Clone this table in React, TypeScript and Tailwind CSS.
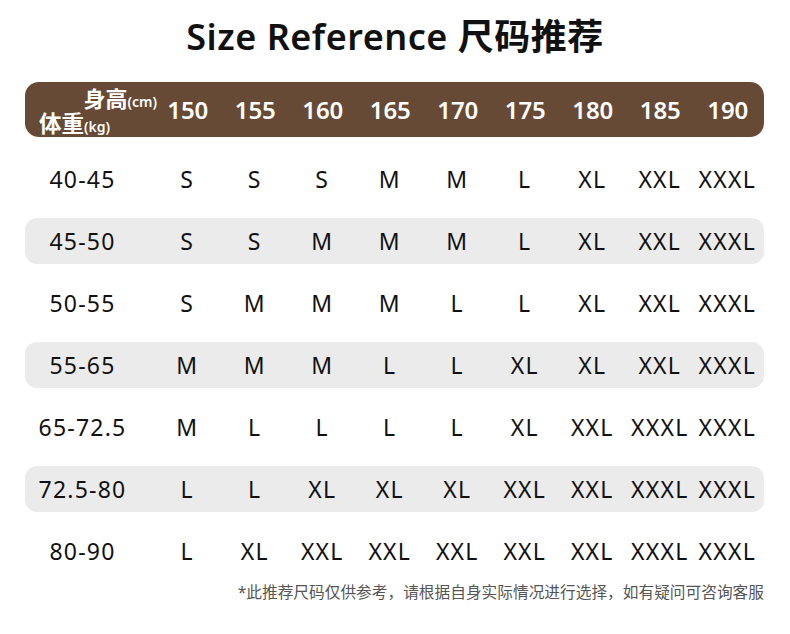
import React from "react";

const heights = ["150", "155", "160", "165", "170", "175", "180", "185", "190"];
const rows: { w: string; s: string[] }[] = [
  { w: "40-45", s: ["S", "S", "S", "M", "M", "L", "XL", "XXL", "XXXL"] },
  { w: "45-50", s: ["S", "S", "M", "M", "M", "L", "XL", "XXL", "XXXL"] },
  { w: "50-55", s: ["S", "M", "M", "M", "L", "L", "XL", "XXL", "XXXL"] },
  { w: "55-65", s: ["M", "M", "M", "L", "L", "XL", "XL", "XXL", "XXXL"] },
  { w: "65-72.5", s: ["M", "L", "L", "L", "L", "XL", "XXL", "XXXL", "XXXL"] },
  { w: "72.5-80", s: ["L", "L", "XL", "XL", "XL", "XXL", "XXL", "XXXL", "XXXL"] },
  { w: "80-90", s: ["L", "XL", "XXL", "XXL", "XXL", "XXL", "XXL", "XXXL", "XXXL"] },
];

const font = { fontFamily: '"Noto Sans", "Noto Sans CJK SC", sans-serif' };

export default function App() {
  return (
    <div
      className="w-[790px] h-[634px] bg-white flex flex-col overflow-hidden"
      style={font}
    >
      <h1 className="mt-[13px] h-[48px] text-center text-[36px] leading-[48px] font-semibold tracking-[0.5px] text-[#111]">
        Size Reference 尺码推荐
      </h1>
      <div className="mt-[21px] mx-[25px] w-[739px]">
        <div className="grid grid-cols-[129px_repeat(9,67.5px)] h-[55px] items-center rounded-[14px] bg-[#664a36] text-white">
          <div className="relative h-full">
            <div className="absolute right-[-3px] top-[3px] flex items-baseline font-semibold">
              <span className="text-[22px] leading-[26px]">身高</span>
              <span className="text-[14px]">(cm)</span>
            </div>
            <div className="absolute left-[14px] bottom-[0px] flex items-baseline font-semibold">
              <span className="text-[22.5px] leading-[26px]">体重</span>
              <span className="text-[14px]">(kg)</span>
            </div>
          </div>
          {heights.map((h) => (
            <div key={h} className="text-center text-[24px] font-semibold leading-[30px]">
              {h}
            </div>
          ))}
        </div>
        <div className="mt-[19px] flex flex-col gap-[16px]">
          {rows.map((r, i) => (
            <div
              key={r.w}
              className={
                "grid grid-cols-[129px_repeat(9,67.5px)] h-[46px] items-center rounded-[12px] text-[#111] " +
                (i % 2 === 1 ? "bg-[#ebebeb]" : "bg-white")
              }
            >
              <div className="pr-[14px] text-center text-[23px] tracking-[1.2px] leading-[30px]">{r.w}</div>
              {r.s.map((s, j) => (
                <div key={j} className="pr-[1px] text-center text-[23px] tracking-[1.2px] leading-[30px]">
                  {s}
                </div>
              ))}
            </div>
          ))}
        </div>
        <div className="mt-[8px] text-right text-[15.7px] leading-[20px] text-[#555]">
          *此推荐尺码仅供参考，请根据自身实际情况进行选择，如有疑问可咨询客服
        </div>
      </div>
    </div>
  );
}
